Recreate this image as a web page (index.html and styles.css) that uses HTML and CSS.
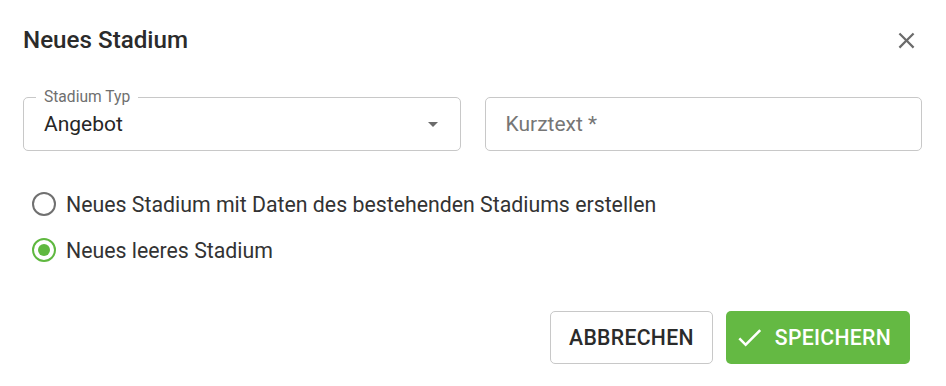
FILE: index.html
```html
<!DOCTYPE html>
<html lang="de">
<head>
<meta charset="utf-8">
<title>Neues Stadium</title>
<link rel="stylesheet" href="styles.css">
</head>
<body>
<div class="dialog">
  <div class="header">
    <h2 class="title">Neues Stadium</h2>
    <button class="close" aria-label="Schließen">
      <svg viewBox="0 0 24 24" width="27" height="27"><path fill="currentColor" d="M19 6.41L17.59 5 12 10.59 6.41 5 5 6.41 10.59 12 5 17.59 6.41 19 12 13.41 17.59 19 19 17.59 13.41 12z"/></svg>
    </button>
  </div>
  <div class="fields">
    <div class="field">
      <span class="field-label">Stadium Typ</span>
      <span class="field-value">Angebot</span>
      <span class="arrow"></span>
    </div>
    <div class="field">
      <span class="field-placeholder">Kurztext *</span>
    </div>
  </div>
  <div class="radios">
    <label class="radio-row">
      <span class="radio"></span>
      <span class="radio-text">Neues Stadium mit Daten des bestehenden Stadiums erstellen</span>
    </label>
    <label class="radio-row">
      <span class="radio checked"><span class="dot"></span></span>
      <span class="radio-text">Neues leeres Stadium</span>
    </label>
  </div>
  <div class="actions">
    <button class="btn btn-outline">ABBRECHEN</button>
    <button class="btn btn-primary">
      <svg viewBox="0 0 24 24" width="31" height="31"><path fill="currentColor" d="M9 16.17L4.83 12l-1.42 1.41L9 19 21 7l-1.41-1.41z"/></svg>
      <span>SPEICHERN</span>
    </button>
  </div>
</div>
</body>
</html>
```
FILE: styles.css
```css
html, body {
  margin: 0;
  padding: 0;
  background: #ffffff;
}
body {
  font-family: Roboto, "Liberation Sans", sans-serif;
  color: #333333;
}
.dialog {
  width: 946px;
  height: 386px;
  box-sizing: border-box;
  padding: 0 24px 0 23px;
}
.header {
  height: 80px;
  display: flex;
  align-items: center;
  justify-content: space-between;
}
.title {
  margin: 0;
  font-size: 24.2px;
  font-weight: 500;
  color: #2b2b2b;
  letter-spacing: 0;
}
.close {
  border: 0;
  background: none;
  padding: 0;
  margin-right: 2px;
  color: #6b6b6b;
  display: flex;
  cursor: pointer;
}
.fields {
  margin-top: 17px;
  display: grid;
  grid-template-columns: 1fr 1fr;
  gap: 24px;
}
.field {
  position: relative;
  height: 54px;
  box-sizing: border-box;
  border: 1px solid #c8c8c8;
  border-radius: 5px;
  display: flex;
  align-items: center;
  padding: 0 20px;
}
.field-label {
  position: absolute;
  left: 12px;
  top: -10px;
  padding: 0 8px;
  background: #ffffff;
  font-size: 15.6px;
  line-height: 18px;
  color: #6f6f6f;
}
.field-value {
  font-size: 21px;
  color: #262626;
  flex: 1;
}
.field-placeholder {
  font-size: 21px;
  color: #767676;
}
.arrow {
  width: 0;
  height: 0;
  border-left: 5px solid transparent;
  border-right: 5px solid transparent;
  border-top: 5px solid #6b6b6b;
  margin-right: 2px;
}
.radios {
  margin-top: 30px;
  display: flex;
  flex-direction: column;
}
.radio-row {
  height: 46px;
  display: flex;
  align-items: center;
  padding-left: 9px;
  gap: 10px;
}
.radio {
  width: 24px;
  height: 24px;
  box-sizing: border-box;
  border: 2px solid #707070;
  border-radius: 50%;
  display: flex;
  align-items: center;
  justify-content: center;
}
.radio.checked {
  border-color: #5fb83f;
}
.dot {
  width: 12px;
  height: 12px;
  border-radius: 50%;
  background: #5fb83f;
}
.radio-text {
  font-size: 21.3px;
  color: #333333;
}
.actions {
  margin-top: 38px;
  display: flex;
  justify-content: flex-end;
  gap: 13px;
  padding-right: 12px;
}
.btn {
  height: 53px;
  box-sizing: border-box;
  border-radius: 5px;
  font-family: Roboto, "Liberation Sans", sans-serif;
  font-size: 21.2px;
  font-weight: 500;
  letter-spacing: 0.3px;
  display: flex;
  align-items: center;
  cursor: pointer;
}
.btn-outline {
  background: #ffffff;
  border: 1px solid #c8c8c8;
  color: #2b2b2b;
  padding: 0 18px;
}
.btn-primary {
  background: #64b943;
  border: 0;
  color: #ffffff;
  padding: 0 19px 0 8px;
  gap: 10px;
}
```
